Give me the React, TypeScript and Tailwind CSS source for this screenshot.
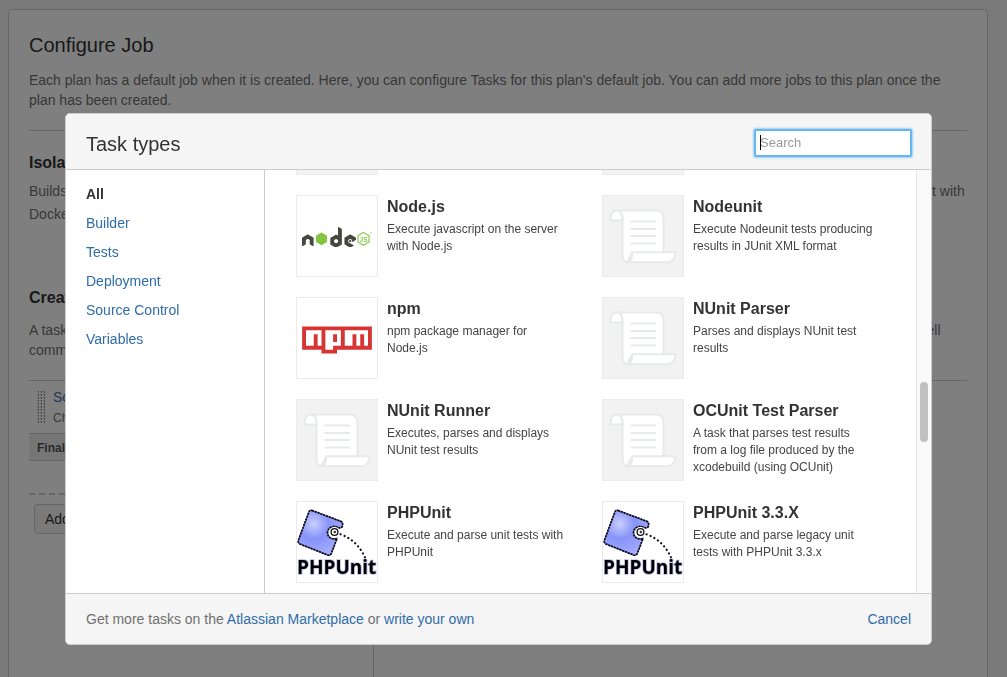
import type { ReactNode } from "react";
import { FaNode, FaNpm } from "react-icons/fa";

type Task = { name?: string; description?: string; icon: ReactNode; plain?: boolean };

function ScriptIcon() {
  return (
    <svg viewBox="0 0 80 80" className="size-20" fill="#fff" stroke="#e8e9e9" strokeWidth="2" strokeLinejoin="round" aria-hidden="true">
      <path d="M13.5 14.5H53.5Q60.5 14.5 60.5 22V57H29L24 66.3C20.500 66 19.500 62 19.500 57V24.500C19.500 18 17.500 14.500 13.500 14.500Z" />
      <path d="M7.500 24.500H19.500C19.500 18 17.500 14.500 13.500 14.500C9.500 14.500 7.500 18.500 7.500 24.500Z" />
      <path d="M24 66.300C27.500 66 29.300 62 29.300 56.300H72.500C72.300 61.500 70.500 65 66 66.300Z" />
      <path d="M27.500 25.500H53M27.500 33H53M27.500 40H53M27.500 47.500H53" />
    </svg>
  );
}

function NodeLogo() {
  return (
    <svg viewBox="0 0 80 80" className="size-20" aria-hidden="true">
      <defs>
        <clipPath id="node-n"><rect x="0" y="20" width="17.500" height="30" /></clipPath>
        <clipPath id="node-de"><rect x="31.500" y="20" width="28" height="31" /></clipPath>
      </defs>
      <g clipPath="url(#node-n)" stroke="#46483e" strokeWidth="8"><FaNode x="5" y="20.500" size={54} color="#46483e" /></g>
      <path d="M24.500 36.500L30 39.700V46L24.500 49.300L19 46V39.700Z" fill="#83c440" />
      <g clipPath="url(#node-de)" stroke="#46483e" strokeWidth="8"><FaNode x="5" y="20.500" size={54} color="#46483e" /></g>
      <path d="M66.500 36.500L72 39.500V46L66.500 49.300L61 46V39.500Z" fill="none" stroke="#8cc84b" strokeWidth="1.200" />
      <text x="66.500" y="45.500" fontSize="6.500" fontWeight="700" textAnchor="middle" fill="#8cc84b">JS</text>
      <circle cx="74" cy="37" r=".7" fill="#8cc84b" />
    </svg>
  );
}

function NpmLogo() {
  return <FaNpm className="h-[62px] w-[70px] text-[#d73434]" aria-hidden="true" />;
}

const puzzleOutline =
  "M15 8.500L43 19Q47 20.500 45 25Q43.500 26.500 41 25.500C36.500 23 31 25 30.500 30.500C30.500 35.500 35 38 40 36.500L34.500 51Q33.500 54 30.500 53L3 42Q.5 40.500 1.500 38L11.500 11Q12.500 7.500 15 8.500Z";

function PhpUnitLogo() {
  return (
    <svg viewBox="0 0 80 80" className="size-20" aria-hidden="true">
      <defs>
        <radialGradient id="puzzle" cx=".35" cy=".3" r=".75">
          <stop offset="0" stopColor="#c9cfff" />
          <stop offset=".45" stopColor="#8793f8" />
          <stop offset="1" stopColor="#a5aeff" />
        </radialGradient>
      </defs>
      <path d={puzzleOutline} fill="url(#puzzle)" stroke="#6a70a0" strokeWidth="1.400" />
      <path d={puzzleOutline} fill="none" stroke="#050510" strokeWidth="1.600" strokeDasharray="2 1" />
      <circle cx="37.500" cy="30" r="5" fill="#fff" />
      <circle cx="37.500" cy="30" r="3.400" fill="#fff" stroke="#111" strokeWidth="1.300" />
      <circle cx="37.800" cy="30" r="1.200" fill="#333" />
      <path d="M43.500 32.300Q62 39 69.500 59" fill="none" stroke="#10101c" strokeWidth="2.200" strokeLinecap="round" strokeDasharray=".1 4.200" />
      <text x="0" y="72" fontSize="19" fontWeight="700" fill="#000" stroke="#b9bee8" strokeWidth="1.500" paintOrder="stroke" className="font-['Open_Sans',sans-serif]">
        PHPUnit
      </text>
    </svg>
  );
}

const tasks: Task[] = [
  { icon: <ScriptIcon />, plain: true },
  { icon: <ScriptIcon />, plain: true },
  { name: "Node.js", description: "Execute javascript on the server with Node.js", icon: <NodeLogo /> },
  { name: "Nodeunit", description: "Execute Nodeunit tests producing results in JUnit XML format", icon: <ScriptIcon />, plain: true },
  { name: "npm", description: "npm package manager for Node.js", icon: <NpmLogo /> },
  { name: "NUnit Parser", description: "Parses and displays NUnit test results", icon: <ScriptIcon />, plain: true },
  { name: "NUnit Runner", description: "Executes, parses and displays NUnit test results", icon: <ScriptIcon />, plain: true },
  { name: "OCUnit Test Parser", description: "A task that parses test results from a log file produced by the xcodebuild (using OCUnit)", icon: <ScriptIcon />, plain: true },
  { name: "PHPUnit", description: "Execute and parse unit tests with PHPUnit", icon: <PhpUnitLogo /> },
  { name: "PHPUnit 3.3.X", description: "Execute and parse legacy unit tests with PHPUnit 3.3.x", icon: <PhpUnitLogo /> },
];

const categories = ["Builder", "Tests", "Deployment", "Source Control", "Variables"];

function TaskCard({ task }: { task: Task }) {
  return (
    <li className="flex h-[82px] gap-[9px]">
      <div className={`flex size-[82px] shrink-0 items-center justify-center border border-[#ebebeb] ${task.plain ? "bg-[#f2f2f2]" : "bg-white"}`}>
        {task.icon}
      </div>
      {task.name && (
        <div className="min-w-0 flex-1">
          <h3 className="mt-0.5 text-base/5 font-bold text-[#333]">{task.name}</h3>
          <p className="mt-1 text-xs/[17px] text-[#444]">{task.description}</p>
        </div>
      )}
    </li>
  );
}

function DragHandle() {
  return (
    <svg className="mt-[4px] h-8 w-2 shrink-0" viewBox="0 0 8 32" aria-hidden="true">
      <defs>
        <pattern id="grip" width="3" height="3" patternUnits="userSpaceOnUse">
          <rect width="2" height="1" fill="#ccc" />
          <rect x="1" width="1" height="2" fill="#999" />
        </pattern>
      </defs>
      <rect width="8" height="32" fill="url(#grip)" />
    </svg>
  );
}

function JobPage() {
  return (
    <main className="mt-[9px] mr-[19px] ml-2 flex flex-1 flex-col rounded-t-[5px] border border-b-0 border-[#ccc] bg-white px-5 pt-[23px] text-sm/5 text-[#707070]">
      <h1 className="text-xl/6 text-[#333]">Configure Job</h1>
      <p className="mt-[13px]">
        Each plan has a default job when it is created. Here, you can configure Tasks for this plan's default job. You can add more jobs to this plan once the plan has been created.
      </p>
      <hr className="mt-5 border-[#ccc]" />
      <h2 className="mt-[22px] text-base/5 font-bold text-[#333]">Isolated build</h2>
      <p className="mt-[7px] leading-[23px]">
        Builds are normally run in the agent's native operating system. If you want to run your build in an isolated and very carefully controlled environment with Docker, choose an image.
      </p>
      <h2 className="mt-[62px] text-base/5 font-bold text-[#333]">Create Tasks</h2>
      <p className="mt-3">
        A task is a piece of work that is being executed as part of the build. The execution of a script, an Ant Target or a Maven goal are examples of a shell command.
      </p>
      <div className="mt-5 flex flex-1 border-t border-[#ccc]">
        <div className="w-[345px] border-r border-[#ccc]">
          <div className="flex h-[52px] gap-2 px-2 pt-[6px]">
            <DragHandle />
            <div>
              <a href="#source" className="block text-[#3572b0]">Source Code Checkout</a>
              <p className="text-xs/[22px]">Checkout Default Repository</p>
            </div>
          </div>
          <h3 className="h-7 border-y border-[#ccc] bg-[#ededed] px-2 text-xs/7 font-bold text-[#555]">Final tasks</h3>
          <div className="mt-8 h-[2px] bg-[repeating-linear-gradient(to_right,#ccc_0_6px,transparent_6px_10px)]" />
          <button type="button" className="mt-[9px] ml-[5px] h-[30px] rounded-[3px] border border-[#ccc] bg-[#f5f5f5] px-[10px] text-[#333]">Add task</button>
        </div>
      </div>
    </main>
  );
}

export default function App() {
  return (
    <div className="flex min-h-screen flex-col bg-[#f5f5f5] font-['Liberation_Sans',Arial,sans-serif]">
      <JobPage />
      <div className="fixed inset-0 flex bg-black/50 pt-[113px] pr-[75px] pb-8 pl-[65px]">
        <section role="dialog" aria-modal="true" aria-labelledby="dialog-title" className="flex min-w-0 flex-1 flex-col overflow-hidden rounded-[5px] border border-[#ccc] bg-white text-sm/5">
          <header className="flex h-14 shrink-0 items-center justify-between border-b border-[#ccc] bg-[#f5f5f5] pt-0.5 pr-[19px] pl-5">
            <h2 id="dialog-title" className="pt-0.5 text-xl/6 text-[#333]">Task types</h2>
            <div className="relative">
              <input
                type="search"
                aria-label="Search"
                placeholder="Search"
                className="block h-7 w-[158px] rounded-[2px] border-2 border-[#66b6f2] bg-white px-1 text-[13px] text-[#333] shadow-[0_0_2px_1px_#9dd0f7] outline-none placeholder:text-[#999]"
              />
              <span className="absolute top-[6px] left-[6px] h-[15px] w-px bg-black" />
            </div>
          </header>
          <div className="flex min-h-0 flex-1">
            <nav className="w-[199px] shrink-0 border-r border-[#ccc] px-5 pt-[14px]">
              <ul className="flex flex-col gap-[9px]">
                <li><a href="#all" aria-current="page" className="font-bold text-[#333]">All</a></li>
                {categories.map((c) => (
                  <li key={c}><a href={`#${c}`} className="text-[#2f6ca8]">{c}</a></li>
                ))}
              </ul>
            </nav>
            <div className="flex min-w-0 flex-1 flex-col justify-end overflow-hidden pr-10 pb-[10px] pl-[31px]">
              <ul className="grid grid-cols-2 gap-x-8 gap-y-5">
                {tasks.map((t, i) => <TaskCard key={i} task={t} />)}
              </ul>
            </div>
            <div className="w-[15px] shrink-0 border-l border-[#e7e7e7] bg-[#fafafa] pt-[212px] pl-[3px]" aria-hidden="true">
              <div className="h-[60px] w-2 rounded-full bg-[#c1c1c1]" />
            </div>
          </div>
          <footer className="flex h-[51px] shrink-0 items-center justify-between border-t border-[#ccc] bg-[#f5f5f5] px-5 text-[#707070]">
            <p>
              Get more tasks on the <a href="#marketplace" className="text-[#2f6ca8]">Atlassian Marketplace</a> or <a href="#write" className="text-[#2f6ca8]">write your own</a>
            </p>
            <button type="button" className="text-[#2f6ca8]">Cancel</button>
          </footer>
        </section>
      </div>
    </div>
  );
}
